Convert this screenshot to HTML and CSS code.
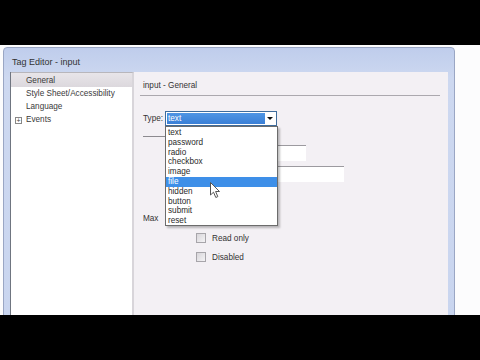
FILE: index.html
```html
<!DOCTYPE html>
<html>
<head>
  <meta charset="UTF-8">
  <title>Tag Editor - input</title>
  <link rel="stylesheet" href="styles.css">
</head>
<body>
  <div class="screen">
    <div class="desk">
      <div class="window">
        <div class="titlebar">Tag Editor - input</div>
        <div class="win-body">
          <ul class="cats">
            <li class="sel">General</li>
            <li>Style Sheet/Accessibility</li>
            <li>Language</li>
            <li class="tree"><span class="plus">+</span>Events</li>
          </ul>
          <div class="panel">
            <div class="panel-head">input - General</div>
            <div class="form">
              <div class="row type-row">
                <span class="lbl">Type:</span>
                <div class="select">
                  <span class="sel-text">text</span>
                  <span class="arrow"></span>
                  <ul class="dropdown">
                    <li>text</li>
                    <li>password</li>
                    <li>radio</li>
                    <li>checkbox</li>
                    <li>image</li>
                    <li class="hl">file</li>
                    <li>hidden</li>
                    <li>button</li>
                    <li>submit</li>
                    <li>reset</li>
                  </ul>
                </div>
              </div>
              <div class="short-rule"></div>
              <div class="field f1"></div>
              <div class="field f2"></div>
              <div class="row max-row"><span class="lbl">Max</span></div>
              <div class="checks">
                <label class="check"><span class="box"></span>Read only</label>
                <label class="check"><span class="box"></span>Disabled</label>
              </div>
            </div>
          </div>
        </div>
      </div>
    </div>
  </div>
  <svg class="cursor" width="12" height="17" viewBox="0 0 12 17">
    <path d="M0.5 0.5 L0.5 13 L3.5 10.2 L5.8 15.5 L7.8 14.6 L5.6 9.5 L9.5 9.5 Z" fill="#fff" stroke="#555" stroke-width="1"/>
  </svg>
</body>
</html>
```

FILE: styles.css
```css
* { box-sizing: border-box; }
html, body { margin: 0; padding: 0; }
body {
  background: #000;
  width: 480px;
  height: 360px;
  overflow: hidden;
  font-family: "Liberation Sans", Arial, sans-serif;
  font-size: 8.2px;
  color: #2a2a2a;
  position: relative;
}
.screen { padding-top: 45px; height: 360px; }
.desk {
  height: 270px;
  background: #fcfcfd;
  padding: 2px 0 0 3px;
  overflow: hidden;
}
.window {
  width: 452px;
  height: 280px;
  background: linear-gradient(#bfcdec, #cdd8f0 30px, #c9d5ef);
  border: 1px solid #9aa6c4;
  border-radius: 4px 4px 0 0;
  padding: 0 6px;
  display: flex;
  flex-direction: column;
}
.titlebar {
  height: 24px;
  line-height: 28px;
  padding-left: 2px;
  font-size: 9px;
  color: #333;
}
.win-body {
  flex: 1;
  display: flex;
  border-left: 1px solid #6f7580;
  background: #f3f0f4;
}
.cats {
  list-style: none;
  margin: 0;
  padding: 0;
  width: 123px;
  background: #fff;
  border-right: 2px solid #d8d5da;
  border-top: 1px solid #b8b6bb;
}
.cats li {
  height: 13px;
  line-height: 13px;
  padding-left: 15px;
  color: #3a3a3a;
}
.cats li.sel {
  height: 14px;
  line-height: 15px;
  background: linear-gradient(#e8e5e9, #dcd8dd);
}
.cats li.tree { padding-left: 4px; }
.plus {
  display: inline-block;
  width: 7px;
  height: 7px;
  border: 1px solid #888;
  font-size: 7px;
  line-height: 5px;
  text-align: center;
  margin-right: 4px;
  vertical-align: -1px;
  color: #444;
}
.panel {
  flex: 1;
  padding: 9px 8px 0 6px;
}
.panel-head {
  padding: 0 0 5px 3px;
  border-bottom: 1px solid #aba8ae;
  color: #333;
}
.form { padding-left: 3px; }
.row { display: flex; align-items: center; }
.type-row { margin-top: 15px; }
.lbl { width: 22px; color: #333; }
.select {
  position: relative;
  width: 112px;
  height: 15px;
  border: 1px solid #3f6c9c;
  background: #fff;
  padding: 1px;
}
.sel-text {
  display: block;
  width: 98px;
  height: 11px;
  line-height: 11px;
  padding-left: 1px;
  color: #fff;
  background: linear-gradient(#4f95e4, #3a7fd6);
}
.arrow {
  position: absolute;
  right: 3px;
  top: 5px;
  border-left: 3px solid transparent;
  border-right: 3px solid transparent;
  border-top: 3px solid #111;
}
.dropdown {
  position: absolute;
  left: -1px;
  top: 14px;
  width: 113px;
  height: 100px;
  margin: 0;
  padding: 1px 0 0 0;
  list-style: none;
  background: #fff;
  border: 1px solid #6c6c6c;
  box-shadow: 2px 2px 2px rgba(0, 0, 0, 0.25);
  z-index: 2;
}
.dropdown li {
  height: 9.8px;
  line-height: 9.8px;
  padding-left: 2px;
  color: #2a2a2a;
}
.dropdown li.hl {
  background: #3e8fe8;
  color: #fff;
}
.short-rule {
  width: 40px;
  height: 1px;
  background: #8c8a8f;
  margin-top: 10px;
}
.field {
  height: 16px;
  background: #fff;
  border-top: 1px solid #9c9a9f;
}
.f1 { width: 106px; margin: 8px 0 0 57px; }
.f2 { width: 144px; margin: 5px 0 0 57px; }
.max-row { margin-top: 32px; }
.checks { margin: 10px 0 0 53px; }
.check {
  display: flex;
  align-items: center;
  height: 10px;
  margin-bottom: 9px;
  color: #333;
}
.box {
  width: 10px;
  height: 10px;
  border: 1px solid #a7a5aa;
  background: linear-gradient(135deg, #d8d6da, #f4f3f5);
  margin-right: 6px;
}
.cursor {
  position: absolute;
  left: 210px;
  top: 182px;
  z-index: 5;
}
```
